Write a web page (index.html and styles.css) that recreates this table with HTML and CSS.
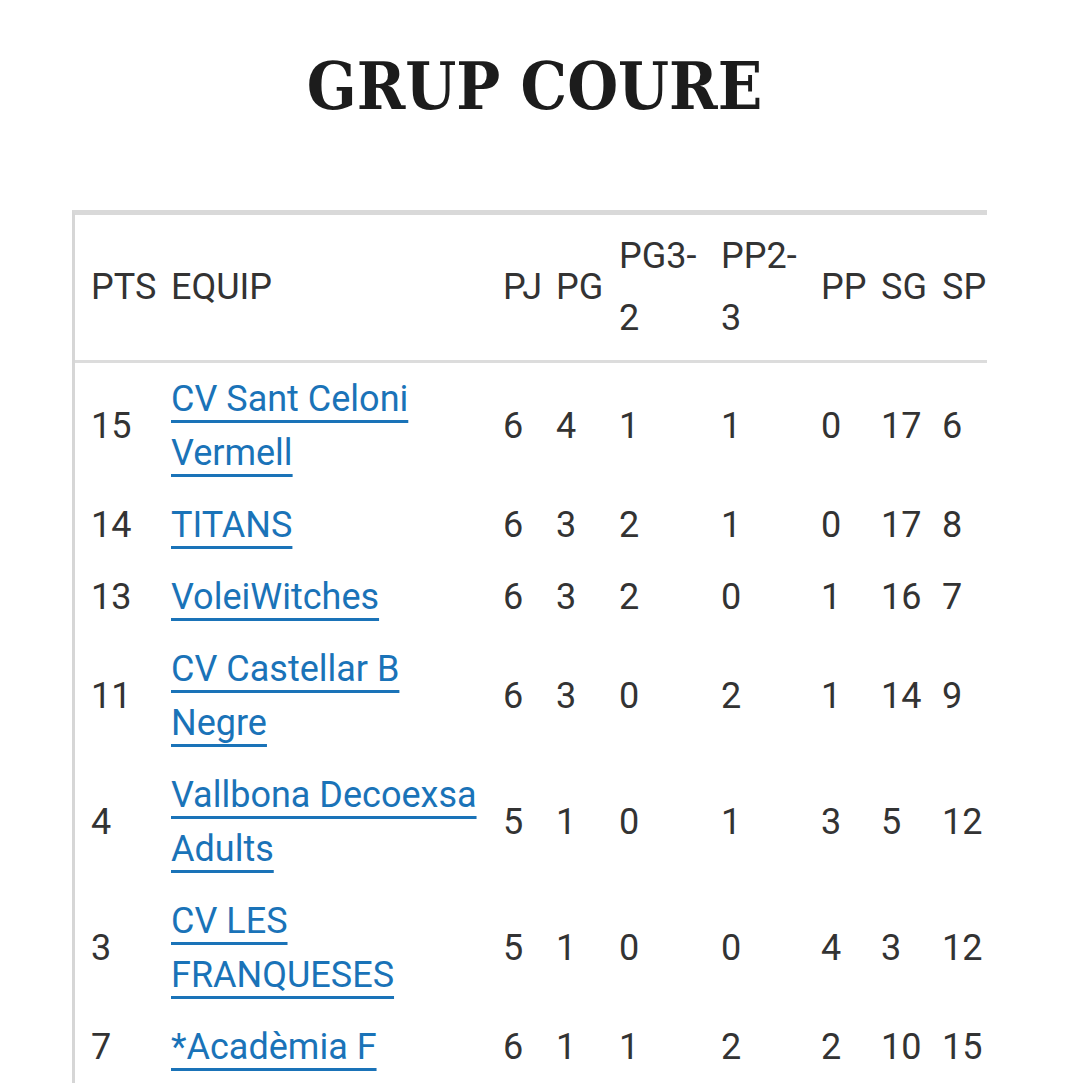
FILE: index.html
```html
<!DOCTYPE html>
<html lang="ca">
<head>
<meta charset="utf-8">
<title>Grup Coure</title>
<link rel="stylesheet" href="styles.css">
</head>
<body>
<h1 class="title">GRUP COURE</h1>
<div class="table-wrap">
  <table class="standings">
    <colgroup>
      <col class="c-pts"><col class="c-team"><col class="c-pj"><col class="c-pg"><col class="c-pg32"><col class="c-pp23"><col class="c-pp"><col class="c-sg"><col class="c-sp">
    </colgroup>
    <thead>
      <tr><th>PTS</th><th>EQUIP</th><th>PJ</th><th>PG</th><th>PG3-2</th><th>PP2-3</th><th>PP</th><th>SG</th><th>SP</th></tr>
    </thead>
    <tbody>
      <tr><td>15</td><td><a href="#">CV Sant Celoni Vermell</a></td><td>6</td><td>4</td><td>1</td><td>1</td><td>0</td><td>17</td><td>6</td></tr>
      <tr><td>14</td><td><a href="#">TITANS</a></td><td>6</td><td>3</td><td>2</td><td>1</td><td>0</td><td>17</td><td>8</td></tr>
      <tr><td>13</td><td><a href="#">VoleiWitches</a></td><td>6</td><td>3</td><td>2</td><td>0</td><td>1</td><td>16</td><td>7</td></tr>
      <tr><td>11</td><td><a href="#">CV Castellar B Negre</a></td><td>6</td><td>3</td><td>0</td><td>2</td><td>1</td><td>14</td><td>9</td></tr>
      <tr><td>4</td><td><a href="#">Vallbona Decoexsa Adults</a></td><td>5</td><td>1</td><td>0</td><td>1</td><td>3</td><td>5</td><td>12</td></tr>
      <tr><td>3</td><td><a href="#">CV LES FRANQUESES</a></td><td>5</td><td>1</td><td>0</td><td>0</td><td>4</td><td>3</td><td>12</td></tr>
      <tr><td>7</td><td><a href="#">*Acadèmia F</a></td><td>6</td><td>1</td><td>1</td><td>2</td><td>2</td><td>10</td><td>15</td></tr>
    </tbody>
  </table>
</div>
</body>
</html>
```
FILE: styles.css
```css
html, body {
  margin: 0;
  padding: 0;
  background: #ffffff;
}
body {
  padding-top: 46px;
  font-family: Roboto, "Liberation Sans", sans-serif;
  color: #333333;
}
.title {
  margin: 0 0 84px;
  font-family: "DejaVu Serif", "Liberation Serif", serif;
  font-weight: bold;
  font-stretch: condensed;
  font-size: 65px;
  line-height: 80px;
  text-align: center;
  color: #1c1c1c;
}
.table-wrap {
  margin-left: 72px;
  width: 915px;
  overflow: hidden;
}
.standings {
  border-collapse: separate;
  border-spacing: 0;
  table-layout: fixed;
  width: 930px;
  border-top: 5px solid #d9d9d9;
  border-left: 3px solid #d6d6d6;
  font-size: 36px;
}
.c-pts { width: 88px; }
.c-team { width: 332px; }
.c-pj { width: 53px; }
.c-pg { width: 63px; }
.c-pg32 { width: 102px; }
.c-pp23 { width: 100px; }
.c-pp { width: 60px; }
.c-sg { width: 61px; }
.c-sp { width: 70px; }
.standings th {
  font-weight: normal;
  text-align: left;
  vertical-align: middle;
  line-height: 62px;
  padding: 10px 8px 11px;
  border-bottom: 3px solid #dcdcdc;
  white-space: normal;
}
.standings td {
  text-align: left;
  vertical-align: middle;
  line-height: 54px;
  padding: 9px 8px;
}
.standings th:first-child,
.standings td:first-child {
  padding-left: 16px;
}
.standings a {
  color: #1a73b8;
  text-decoration: underline;
  text-decoration-thickness: 3px;
  text-underline-offset: 9px;
  text-decoration-skip-ink: none;
}
```
